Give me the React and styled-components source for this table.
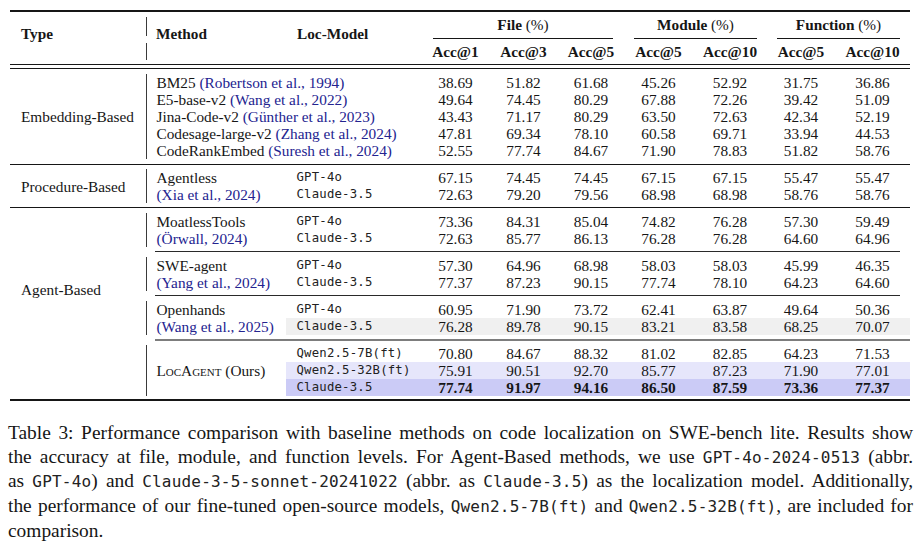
import React from 'react'
import styled, { createGlobalStyle } from 'styled-components'

const INK = '#161616'
const CITE = '#23238f'
const SHADE = { grey: '#f0f0f0', lav: '#e6e6fb', lavDark: '#cbcbf6' }

const GlobalStyle = createGlobalStyle`
  html, body {
    margin: 0;
    padding: 0;
    background: #fff;
  }
  body {
    font-family: "Liberation Serif", "Times New Roman", serif;
    color: ${INK};
  }
`

const Page = styled.div`
  width: 922px;
  padding-top: 10px;
`

const Table = styled.table`
  margin-left: 10px;
  width: 900px;
  table-layout: fixed;
  border-collapse: collapse;
  border-spacing: 0;
  font-size: 15.3px;
  line-height: 17.15px;
`

const Col = styled.col`
  width: ${p => p.$w}px;
`

const Cell = styled.td`
  padding: 0;
  height: 17.15px;
  white-space: nowrap;
  vertical-align: middle;
  text-align: left;
`

const TypeCell = styled(Cell)`
  padding-left: 11px;
  padding-bottom: ${p => p.$lift || 0}px;
`

const MethodCell = styled(Cell)`
  padding-left: 10px;
  border-left: 1px solid #3a3a3a;
`

const ModelCell = styled(Cell)`
  padding-left: 10.5px;
  font-family: "DejaVu Sans Mono", "Liberation Mono", monospace;
  font-size: 12.3px;
  letter-spacing: 0.2px;
  color: #222;
  background: ${p => (p.$shade ? SHADE[p.$shade] : 'transparent')};
`

const Num = styled(Cell)`
  text-align: center;
  font-weight: ${p => (p.$bold ? 700 : 400)};
  background: ${p => (p.$shade ? SHADE[p.$shade] : 'transparent')};
`

const Head = styled.th`
  padding: 0;
  height: 17.15px;
  white-space: nowrap;
  font-weight: 700;
  text-align: ${p => p.$align || 'left'};
  vertical-align: ${p => (p.$top ? 'top' : 'middle')};
  padding-top: ${p => (p.$top ? 9 : 0)}px;
  padding-left: ${p => p.$pl || 0}px;
`

const MethodHead = styled(Head)`
  background:
    linear-gradient(#3a3a3a, #3a3a3a) 0 1.7px / 1px 19.4px no-repeat,
    linear-gradient(#3a3a3a, #3a3a3a) 0 27.7px / 1px 17px no-repeat;
`

const Light = styled.span`
  font-weight: 400;
`

const RuleCell = styled.td`
  padding: 0;
`

const Line = styled.div`
  height: ${p => p.$t || 1}px;
  background: ${p => p.$c || INK};
  margin: ${p => p.$mt ?? 4.1}px ${p => p.$mr || 0}px ${p => p.$mb ?? 4.5}px ${p => p.$ml || 0}px;
`

const Cite = styled.span`
  color: ${CITE};
`

const SmallCaps = styled.span`
  font-variant: small-caps;
`

const Caption = styled.div`
  margin: 19.7px 0 0 8px;
  width: 905px;
  font-size: 19.4px;
  line-height: 23.75px;
`

const CaptionLine = styled.div`
  text-align: justify;
  text-align-last: ${p => (p.$last ? 'left' : 'justify')};
`

const Code = styled.span`
  font-family: "DejaVu Sans Mono", "Liberation Mono", monospace;
  font-size: 16px;
  letter-spacing: 0.2px;
  color: #222;
`

const Nums = ({ values, shade, bold }) =>
  values.map((v, i) => (
    <Num key={i} $shade={shade} $bold={bold}>
      {v}
    </Num>
  ))

const embedding = [
  ['BM25', 'Robertson et al., 1994', ['38.69', '51.82', '61.68', '45.26', '52.92', '31.75', '36.86']],
  ['E5-base-v2', 'Wang et al., 2022', ['49.64', '74.45', '80.29', '67.88', '72.26', '39.42', '51.09']],
  ['Jina-Code-v2', 'Günther et al., 2023', ['43.43', '71.17', '80.29', '63.50', '72.63', '42.34', '52.19']],
  ['Codesage-large-v2', 'Zhang et al., 2024', ['47.81', '69.34', '78.10', '60.58', '69.71', '33.94', '44.53']],
  ['CodeRankEmbed', 'Suresh et al., 2024', ['52.55', '77.74', '84.67', '71.90', '78.83', '51.82', '58.76']],
]

const agents = [
  {
    name: 'MoatlessTools',
    cite: 'Örwall, 2024',
    gpt: ['73.36', '84.31', '85.04', '74.82', '76.28', '57.30', '59.49'],
    claude: ['72.63', '85.77', '86.13', '76.28', '76.28', '64.60', '64.96'],
  },
  {
    name: 'SWE-agent',
    cite: 'Yang et al., 2024',
    gpt: ['57.30', '64.96', '68.98', '58.03', '58.03', '45.99', '46.35'],
    claude: ['77.37', '87.23', '90.15', '77.74', '78.10', '64.23', '64.60'],
  },
  {
    name: 'Openhands',
    cite: 'Wang et al., 2025',
    gpt: ['60.95', '71.90', '73.72', '62.41', '63.87', '49.64', '50.36'],
    claude: ['76.28', '89.78', '90.15', '83.21', '83.58', '68.25', '70.07'],
    shade: 'grey',
  },
]

const FullRule = ({ span = 10, ...line }) => (
  <tr>
    <RuleCell colSpan={span}>
      <Line {...line} />
    </RuleCell>
  </tr>
)

const AgentRule = ({ last }) => (
  <tr>
    <RuleCell colSpan={9}>
      {last ? (
        <Line $t={2} $c="#7d7d7d" $ml={9} $mt={4.1} $mb={3.5} />
      ) : (
        <Line $c="#2a2a2a" $ml={9} $mr={10} />
      )}
    </RuleCell>
  </tr>
)

export default function App() {
  return (
    <Page>
      <GlobalStyle />
      <Table>
        <colgroup>
          <Col $w={136} />
          <Col $w={140} />
          <Col $w={136} />
          <Col $w={67} />
          <Col $w={69} />
          <Col $w={66} />
          <Col $w={69} />
          <Col $w={74} />
          <Col $w={68} />
          <Col $w={75} />
        </colgroup>
        <thead>
          <FullRule $t={2} $mt={0} $mb={3.6} />
          <tr>
            <Head rowSpan={3} $top $pl={11}>Type</Head>
            <MethodHead rowSpan={3} $top $pl={10}>Method</MethodHead>
            <Head rowSpan={3} $top $pl={11}>Loc-Model</Head>
            <Head colSpan={3} $align="center">File <Light>(%)</Light></Head>
            <Head colSpan={2} $align="center">Module <Light>(%)</Light></Head>
            <Head colSpan={2} $align="center">Function <Light>(%)</Light></Head>
          </tr>
          <tr>
            <RuleCell colSpan={3}>
              <Line $mt={5} $mb={4.25} $ml={11} $mr={11} />
            </RuleCell>
            <RuleCell colSpan={2}>
              <Line $mt={5} $mb={4.25} $ml={10} $mr={10} />
            </RuleCell>
            <RuleCell colSpan={2}>
              <Line $mt={5} $mb={4.25} $ml={10} $mr={10} />
            </RuleCell>
          </tr>
          <tr>
            {['Acc@1', 'Acc@3', 'Acc@5', 'Acc@5', 'Acc@10', 'Acc@5', 'Acc@10'].map((h, i) => (
              <Head key={i} $align="center">{h}</Head>
            ))}
          </tr>
          <tr>
            <RuleCell colSpan={10}>
              <Line $mt={3.5} $mb={3.2} $t={1.3} />
              <Line $mt={0} $mb={4.55} />
            </RuleCell>
          </tr>
        </thead>
        <tbody>
          {embedding.map(([name, cite, values], i) => (
            <tr key={name}>
              {i === 0 && <TypeCell rowSpan={5}>Embedding-Based</TypeCell>}
              <MethodCell colSpan={2}>
                {name} <Cite>({cite})</Cite>
              </MethodCell>
              <Nums values={values} />
            </tr>
          ))}
          <FullRule />
          <tr>
            <TypeCell rowSpan={2}>Procedure-Based</TypeCell>
            <MethodCell>Agentless</MethodCell>
            <ModelCell>GPT-4o</ModelCell>
            <Nums values={['67.15', '74.45', '74.45', '67.15', '67.15', '55.47', '55.47']} />
          </tr>
          <tr>
            <MethodCell>
              <Cite>(Xia et al., 2024)</Cite>
            </MethodCell>
            <ModelCell>Claude-3.5</ModelCell>
            <Nums values={['72.63', '79.20', '79.56', '68.98', '68.98', '58.76', '58.76']} />
          </tr>
          <FullRule />
          {agents.map((a, i) => (
            <React.Fragment key={a.name}>
              <tr>
                {i === 0 && (
                  <TypeCell rowSpan={12} $lift={29.8}>
                    Agent-Based
                  </TypeCell>
                )}
                <MethodCell>{a.name}</MethodCell>
                <ModelCell>GPT-4o</ModelCell>
                <Nums values={a.gpt} />
              </tr>
              <tr>
                <MethodCell>
                  <Cite>({a.cite})</Cite>
                </MethodCell>
                <ModelCell $shade={a.shade}>Claude-3.5</ModelCell>
                <Nums values={a.claude} shade={a.shade} />
              </tr>
              <AgentRule last={i === agents.length - 1} />
            </React.Fragment>
          ))}
          <tr>
            <MethodCell rowSpan={3}>
              <SmallCaps>LocAgent</SmallCaps> (Ours)
            </MethodCell>
            <ModelCell>Qwen2.5-7B(ft)</ModelCell>
            <Nums values={['70.80', '84.67', '88.32', '81.02', '82.85', '64.23', '71.53']} />
          </tr>
          <tr>
            <ModelCell $shade="lav">Qwen2.5-32B(ft)</ModelCell>
            <Nums values={['75.91', '90.51', '92.70', '85.77', '87.23', '71.90', '77.01']} shade="lav" />
          </tr>
          <tr>
            <ModelCell $shade="lavDark">Claude-3.5</ModelCell>
            <Nums
              values={['77.74', '91.97', '94.16', '86.50', '87.59', '73.36', '77.37']}
              shade="lavDark"
              bold
            />
          </tr>
          <FullRule $t={2} $mt={3} $mb={0} />
        </tbody>
      </Table>
      <Caption>
        <CaptionLine>
          Table 3: Performance comparison with baseline methods on code localization on SWE-bench lite. Results show
        </CaptionLine>
        <CaptionLine>
          the accuracy at file, module, and function levels. For Agent-Based methods, we use{' '}
          <Code>GPT-4o-2024-0513</Code> (abbr.
        </CaptionLine>
        <CaptionLine>
          as <Code>GPT-4o</Code>) and <Code>Claude-3-5-sonnet-20241022</Code> (abbr. as <Code>Claude-3.5</Code>) as
          the localization model. Additionally,
        </CaptionLine>
        <CaptionLine>
          the performance of our fine-tuned open-source models, <Code>Qwen2.5-7B(ft)</Code> and{' '}
          <Code>Qwen2.5-32B(ft)</Code>, are included for
        </CaptionLine>
        <CaptionLine $last>comparison.</CaptionLine>
      </Caption>
    </Page>
  )
}
